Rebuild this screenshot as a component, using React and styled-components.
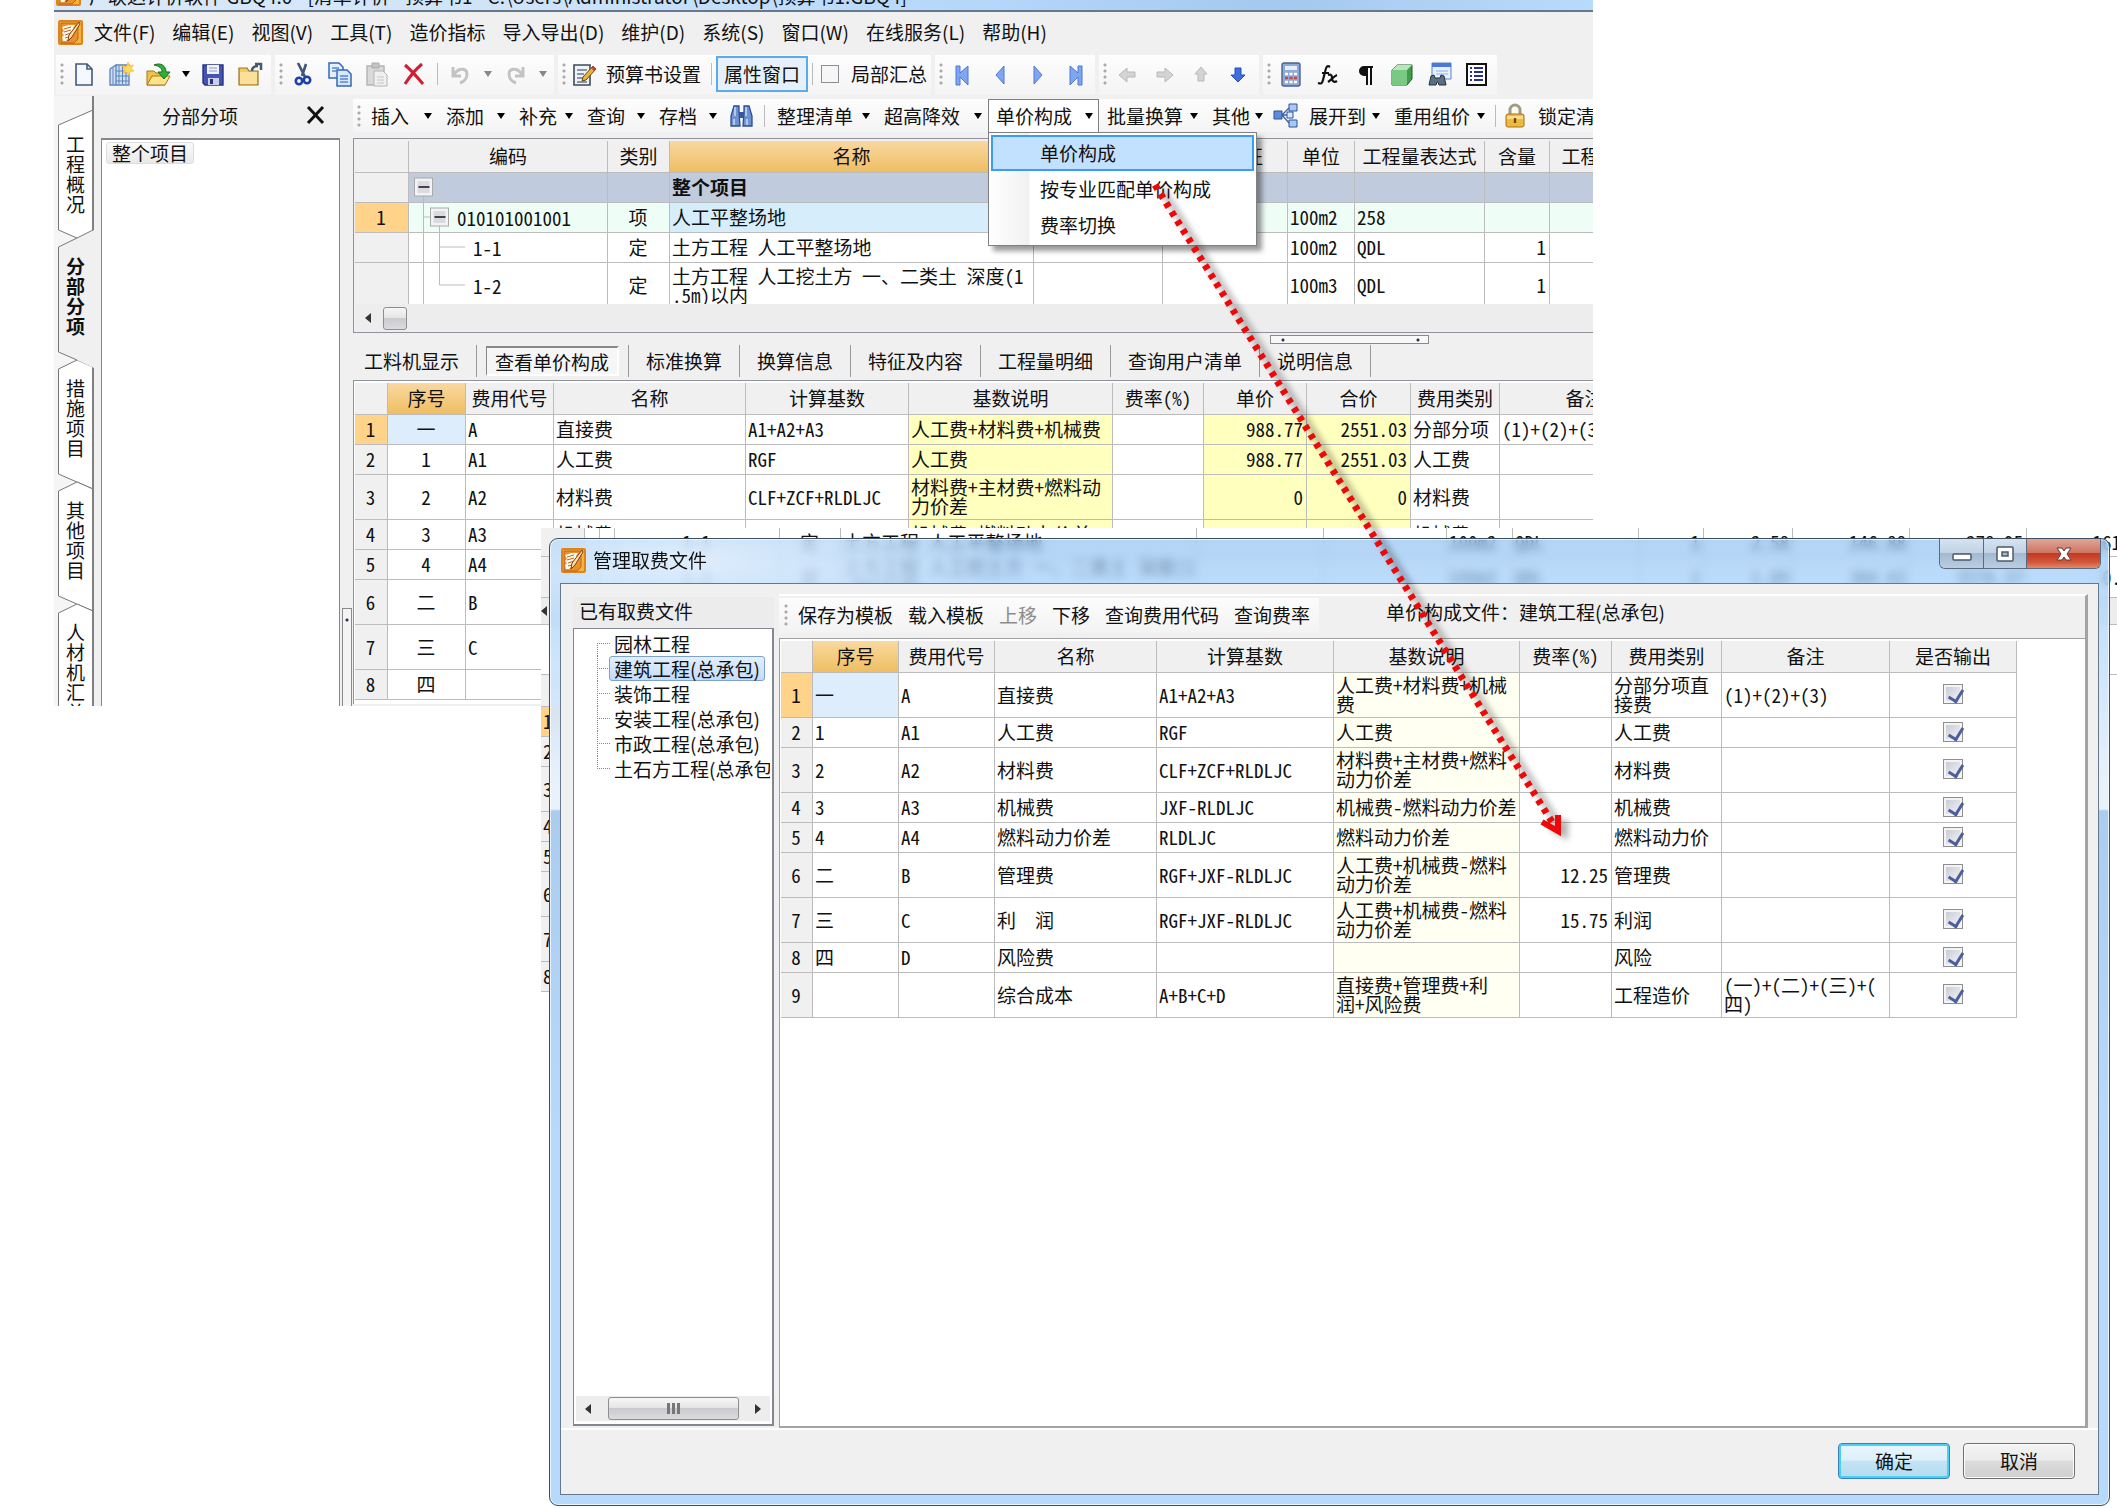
import styled, { createGlobalStyle, css } from 'styled-components'
import { useState } from 'react'

const GlobalStyle = createGlobalStyle`
  * {
    box-sizing: border-box;
  }
  body {
    margin: 0;
    background: #fff;
  }
  body, button, input, table {
    font-family: "Noto Sans CJK SC", "Liberation Sans", sans-serif;
    font-size: 19px;
    line-height: 20px;
    color: #111;
  }
  button {
    padding: 0;
    border: 0;
    background: none;
    white-space: nowrap;
  }
`

const gridFont = `"Noto Sans Mono CJK SC", "Noto Sans CJK SC", "Liberation Mono", monospace`

const Desktop = styled.div`
  position: relative;
  min-height: 100vh;
  overflow: hidden;
`

/* ---------- main window ---------- */

const MainWindow = styled.main`
  margin: 0 524px 0 54px;
  overflow: hidden;
  background: #f0f0f0;
`
const CaptionBar = styled.header`
  display: flex;
  align-items: flex-end;
  gap: 8px;
  height: 12px;
  padding: 0 0 4px 2px;
  border-bottom: 2px solid #66788c;
  background: linear-gradient(90deg, #dbe9f7, #cfe4f9 30%, #b4d7fa 60%, #a5c9ee 80%, #b9dbfb);
  overflow: hidden;
  white-space: nowrap;
  line-height: 20px;
`
const MenuBar = styled.nav`
  display: flex;
  align-items: center;
  gap: 17px;
  height: 43px;
  padding: 0 0 3px 4px;
`
const MenuLogo = styled.div`
  display: flex;
  margin-right: -6px;
`
const ToolRow = styled.div`
  display: flex;
  gap: 4px;
  height: 41px;
  padding-left: 2px;
`
const Band = styled.div`
  display: flex;
  align-items: center;
  height: 40px;
  padding: 0 2px 2px 0;
  background: linear-gradient(#fdfdfd, #f4f4f4);
`
const Grip = styled.span`
  flex: none;
  width: 10px;
  height: 24px;
  background: radial-gradient(circle at 6px 3px, #aaa 1px, transparent 2px) 0 0 / 10px 6px;
`
const Sep = styled.span`
  flex: none;
  width: 9px;
  height: 22px;
  background: linear-gradient(#bbb, #bbb) center / 1px 100% no-repeat;
`
const IconButton = styled.button`
  display: flex;
  flex: none;
  align-items: center;
  justify-content: center;
  width: ${p => p.$w || 37}px;
  height: 36px;
`
const Caret = styled.span`
  border: 4px solid transparent;
  border-top: 6px solid ${p => (p.$dim ? '#888' : '#000')};
  border-bottom: 0;
`
const CaretButton = styled.button`
  display: flex;
  align-items: center;
  justify-content: center;
  width: 18px;
  height: 36px;
`
const LabelButton = styled.button`
  height: 36px;
  padding: 0 6px;
  ${p => p.$on && css`
    border: 2px solid #5aaaf0;
    background: #e6f0fa;
  `}
`
const CheckLabel = styled.label`
  display: flex;
  align-items: center;
  gap: 12px;
  padding: 0 2px 0 4px;
`
const PlainCheck = styled.input`
  appearance: none;
  width: 18px;
  height: 18px;
  margin: 0;
  border: 1px solid #8a8f96;
  background: #f6f6f6;
`

const Body = styled.div`
  display: flex;
`
const SideTabs = styled.div`
  width: 40px;
  flex: none;
  padding: 20px 0 0 4px;
  background: #f5f5f5;
`
const SideTab = styled.button`
  position: relative;
  display: flex;
  align-items: flex-start;
  width: 36px;
  height: ${p => (p.$last ? 102 : 122)}px;
  padding: 18px 0 0 8px;
  overflow: ${p => (p.$last ? 'hidden' : 'visible')};
  text-align: left;
  white-space: normal;
  z-index: ${p => (p.$on ? 1 : 0)};
  font-weight: ${p => (p.$on ? 700 : 400)};
  svg {
    position: absolute;
    left: 0;
    top: 0;
    overflow: visible;
  }
  span {
    position: relative;
    display: block;
    width: 20px;
    word-break: break-all;
  }
`
const TreePane = styled.section`
  display: flex;
  flex-direction: column;
  flex: none;
  width: 246px;
  padding-left: 7px;
`
const PaneTitle = styled.div`
  display: flex;
  align-items: center;
  justify-content: space-between;
  height: 42px;
  padding: 0 14px 2px 61px;
`
const PaneBody = styled.div`
  flex: 1;
  padding: 2px 4px;
  border: 1px solid #828790;
  border-width: 2px 1px 0;
  background: #fff;
`
const RootNode = styled.button`
  height: 22px;
  padding: 0 5px;
  border: 1px solid #ddd;
  border-radius: 3px;
  background: linear-gradient(#fafafa, #e9e9e9);
  line-height: 18px;
`
const Splitter = styled.div`
  display: flex;
  align-items: flex-end;
  justify-content: center;
  flex: none;
  width: 13px;
  span {
    width: 10px;
    height: 98px;
    border: 1px solid #8a8a8a;
    border-bottom: 0;
    background: radial-gradient(circle at 4px 11px, #335 1px, transparent 2px), #f4f4f4;
  }
`
const Work = styled.section`
  flex: 1;
  min-width: 0;
  padding-top: 3px;
`
const Commands = styled.div`
  display: flex;
  align-items: center;
  height: 33px;
  margin-bottom: 6px;
  background: linear-gradient(#fdfdfd, #f4f4f4);
`
const Command = styled.button`
  display: flex;
  flex: none;
  align-items: center;
  justify-content: space-between;
  width: ${p => p.$w}px;
  height: 34px;
  padding: 0 6px 0 8px;
  ${p => p.$open && css`
    border: 1px solid #808080;
    border-bottom: 0;
    padding: 0 5px 0 7px;
    background: #fff;
  `}
`
const MenuHost = styled.div`
  position: relative;
  flex: none;
`
const Dropdown = styled.div`
  position: absolute;
  z-index: 5;
  left: 0;
  top: 33px;
  width: 269px;
  padding: 2px;
  border: 1px solid #808080;
  background: linear-gradient(90deg, #fff, #f1f1f1 40px, #fff 41px);
  box-shadow: 5px 5px 5px rgba(0, 0, 0, 0.4);
`
const DropItem = styled.button`
  display: block;
  width: 100%;
  height: 36px;
  padding-left: 47px;
  text-align: left;
  border: 2px solid ${p => (p.$on ? '#3c9cf5' : 'transparent')};
  background: ${p => (p.$on ? '#c2e0ff' : 'transparent')};
`
const GridBox = styled.div`
  border: 1px solid #909399;
  border-right: 0;
  border-bottom-width: ${p => (p.$open ? 0 : 1)}px;
  padding: 2px 0 ${p => (p.$open ? 4 : 0)}px 1px;
  background: ${p => (p.$open ? '#fff' : '#f0f0f0')};
  overflow: hidden;
`
const GridClip = styled.div`
  height: 163px;
  overflow: hidden;
  background: #fff;
`
const GridScroll = styled.div`
  display: flex;
  align-items: center;
  gap: 12px;
  height: 28px;
  padding-left: 10px;
  background: #ededed;
`
const Thumb = styled.span`
  display: flex;
  align-items: center;
  justify-content: center;
  gap: 2px;
  width: ${p => p.$w}px;
  height: 23px;
  border: 1px solid #8e8e8e;
  border-radius: 3px;
  background: linear-gradient(#f6f6f6, #e6e6e6 45%, #cacacf 50%, #dcdcdf);
  i {
    width: 3px;
    height: 11px;
    background: #777;
  }
`
const ArrowTip = styled.span`
  border: 5px solid transparent;
  ${p => (p.$right ? 'border-left: 6px solid #333; border-right: 0;' : 'border-right: 6px solid #333; border-left: 0;')}
`
const HandleRow = styled.div`
  padding-right: 164px;
`
const PaneHandle = styled.div`
  width: 159px;
  height: 9px;
  margin: 2px 0 1px auto;
  border: 1px solid #8a8a8a;
  background:
    radial-gradient(circle at 12px 4px, #335 1px, transparent 2px),
    radial-gradient(circle at 147px 4px, #335 1px, transparent 2px),
    #f8f8f8;
`
const TabStrip = styled.div`
  display: flex;
  align-items: center;
  height: 32px;
  margin-bottom: 3px;
`
const TabItem = styled.button`
  height: 32px;
  padding: 0 17px;
  border-right: 1px solid #999;
  &:first-child {
    padding-left: 11px;
  }
  ${p => p.$on && css`
    padding: 0 9px;
    span {
      display: block;
      height: 30px;
      padding: 4px 8px 0 8px;
      border: 2px solid #fff;
      border-top-color: #888;
      border-left: 1px solid #888;
      background: #f6f6f6;
    }
  `}
`

/* ---------- grids ---------- */

const Table = styled.table`
  table-layout: fixed;
  width: ${p => p.$w}px;
  border-spacing: 0;
  background: #fff;
  font-family: ${gridFont};
  line-height: 19px;
`
const Th = styled.th`
  height: 32px;
  padding: 0 0 2px;
  border-right: 1px solid #bcbcbc;
  border-bottom: 1px solid #bcbcbc;
  background: ${p => (p.$hot ? 'linear-gradient(#f9d8a0, #efbe62)' : '#f0f0f0')};
  font-weight: 400;
  white-space: nowrap;
  overflow: hidden;
`
const Td = styled.td`
  height: ${p => p.$h || 30}px;
  padding: 0 3px 2px 2px;
  border-right: 1px solid #bcbcbc;
  border-bottom: 1px solid #bcbcbc;
  background: ${p => p.$bg || '#fff'};
  font-weight: ${p => (p.$bold ? 700 : 400)};
  text-align: ${p => p.$align || 'left'};
  white-space: pre;
  overflow: hidden;
`
const TreeTd = styled(Td)`
  padding: 0;
`
const TreeCell = styled.div`
  display: flex;
  align-items: center;
  gap: 6px;
  height: ${p => p.$h}px;
  svg {
    flex: none;
  }
`
const OutputCheck = styled.input`
  appearance: none;
  display: block;
  width: 20px;
  height: 20px;
  margin: 0 auto;
  border: 1px solid #8e8f8f;
  background: linear-gradient(135deg, #c8ccd4, #f4f4f6) content-box, #f4f4f4;
  padding: 2px;
  &:checked::after {
    content: '';
    display: block;
    width: 7px;
    height: 12px;
    margin: 0 0 0 5px;
    border: solid #4b5f9f;
    border-width: 0 3px 3px 0;
    transform: rotate(32deg);
  }
`

/* ---------- window behind the dialog ---------- */

const BackWindow = styled.div`
  position: absolute;
  left: 541px;
  right: 0;
  top: 528px;
  bottom: 0;
  overflow: hidden;
  background: #fff;
`
const BackScroll = styled.div`
  display: flex;
  align-items: center;
  height: 27px;
  border-bottom: 1px solid #bcbcbc;
  background: #ededed;
`
const BackGap = styled.div`
  height: 50px;
  border-bottom: 1px solid #bcbcbc;
`

/* ---------- dialog ---------- */

const Dialog = styled.section`
  position: absolute;
  left: 549px;
  right: 7px;
  top: 538px;
  bottom: 2px;
  display: flex;
  flex-direction: column;
  padding: 0 10px 10px;
  border: 1px solid #3f4e5e;
  border-radius: 9px;
  box-shadow: inset 0 0 0 1px rgba(255, 255, 255, 0.7);
  background:
    radial-gradient(ellipse 320px 70px at 130px 20px, rgba(240, 247, 254, 0.7), transparent),
    linear-gradient(rgba(140, 190, 240, 0.66), rgba(160, 205, 250, 0.7) 45px, #e9f2fb 250px, #e9f2fb 270px, #aacdef 272px, #b7d9fb 600px);
  backdrop-filter: blur(4px);
`
const DialogTitle = styled.header`
  display: flex;
  align-items: flex-start;
  gap: 7px;
  height: 44px;
  padding: 9px 0 0 1px;
  h1 {
    flex: 1;
    margin: 0;
    font-size: 19px;
    font-weight: 400;
    line-height: 24px;
  }
`
const WindowButtons = styled.div`
  display: flex;
  margin: -9px -2px 0 0;
  border: 1px solid #5c6b7b;
  border-top: 0;
  border-radius: 0 0 6px 6px;
  overflow: hidden;
`
const WindowButton = styled.button`
  display: flex;
  align-items: center;
  justify-content: center;
  width: ${p => (p.$close ? 74 : 43)}px;
  height: 29px;
  border-left: ${p => (p.$first ? 0 : 1)}px solid #5c6b7b;
  background: ${p => (p.$close
    ? 'linear-gradient(#dfa798, #cf7261 48%, #c23a22 50%, #d4563c 80%, #e08a6c)'
    : 'linear-gradient(#d6e3f0, #c1d2e4 48%, #a3b9d0 50%, #b9cee3)')};
`
const Client = styled.div`
  display: flex;
  flex-direction: column;
  flex: 1;
  border: 1px solid #66788c;
  background: #f0f0f0;
`
const Panels = styled.div`
  display: flex;
  flex: 1;
  gap: 5px;
  padding: 10px 10px 0 12px;
  border-bottom: 2px solid #fff;
`
const FilePane = styled.div`
  display: flex;
  flex-direction: column;
  width: 201px;
  padding: 3px 0 2px;
  h2 {
    margin: 0;
    height: 31px;
    padding-left: 6px;
    font-size: 19px;
    font-weight: 400;
    line-height: 28px;
    background: #ececec;
  }
`
const FileBox = styled.div`
  display: flex;
  flex-direction: column;
  justify-content: space-between;
  flex: 1;
  padding: 2px 2px 3px;
  border: 1px solid #828790;
  border-width: 1px 2px 2px 1px;
  background: #fff;
`
const FileList = styled.ul`
  margin: 0;
  padding: 0 0 0 21px;
  list-style: none;
  overflow: hidden;
`
const FileItem = styled.li`
  position: relative;
  height: 25px;
  padding-left: 12px;
  &::before {
    content: '';
    position: absolute;
    left: 0;
    top: ${p => (p.$first ? 12 : 0)}px;
    width: 12px;
    height: 12px;
    border-left: 1px dotted #888;
    border-${p => (p.$first ? 'top' : 'bottom')}: 1px dotted #888;
  }
  &:not(:last-child)::after {
    content: '';
    position: absolute;
    left: 0;
    top: 12px;
    height: 13px;
    border-left: 1px dotted #888;
  }
  button {
    height: 25px;
    padding: 0 4px;
    border: 1px solid ${p => (p.$on ? '#7da2ce' : 'transparent')};
    border-radius: 3px;
    background: ${p => (p.$on ? 'linear-gradient(#e3effd, #c2dcfd)' : 'transparent')};
  }
`
const FileScroll = styled.div`
  display: flex;
  align-items: center;
  justify-content: space-between;
  height: 25px;
  padding: 0 9px;
  background: #ededed;
`
const FeePane = styled.div`
  display: flex;
  flex-direction: column;
  flex: 1;
  min-width: 0;
  border-top: 2px solid #fff;
  border-right: 3px solid #a3a3a3;
  border-bottom: 2px solid #a3a3a3;
`
const FeeTools = styled.div`
  display: flex;
  align-items: center;
  height: 42px;
  padding-bottom: 4px;
`
const FeeBand = styled.div`
  display: flex;
  align-items: center;
  gap: 15px;
  height: 35px;
  padding: 0 9px 0 1px;
  margin-right: 67px;
  background: linear-gradient(#fcfcfc, #f3f3f3);
  ${Grip} {
    margin-right: -7px;
  }
  button:disabled {
    color: #8d8d8d;
  }
`
const FeeFile = styled.div`
  padding-bottom: 6px;
`
const FeeGrid = styled.div`
  flex: 1;
  padding: 2px 0 0 1px;
  border: 1px solid #a0a0a0;
  border-width: 1px 0 0 1px;
  background: #fff;
`
const Footer = styled.footer`
  display: flex;
  justify-content: flex-end;
  gap: 13px;
  padding: 13px 23px 15px;
`
const PushButton = styled.button`
  width: 112px;
  height: 36px;
  border: 1px solid #707070;
  border-radius: 4px;
  background: linear-gradient(#f4f4f4, #ebebeb 48%, #dcdcdc 50%, #cfcfcf);
  box-shadow: inset 0 0 0 1px #fcfcfc;
  ${p => p.$main && css`
    border-color: #3c7fb1;
    background: linear-gradient(#eaf5fb, #dcf0fa 48%, #c3e4f4 50%, #b4dbef);
    box-shadow: inset 0 0 0 2px #48d0f8;
  `}
`

const Pointer = styled.svg`
  position: absolute;
  z-index: 10;
  left: 1140px;
  top: 170px;
  pointer-events: none;
`

/* ---------- icons ---------- */

const Logo = () => (
  <svg width="25" height="25" viewBox="0 0 25 25">
    <rect x="1" y="1" width="23" height="23" rx="1" fill="#f7b23a" stroke="#dd8420" strokeWidth="2" />
    <path d="M3 3h17v16l-4 4H3z" fill="#e8902a" stroke="#b4561a" strokeWidth=".8" />
    <path d="M4 7l7-2 6 0-2 3 1 2-2 2 0 3-3 3-3 3-3 0-1-4 2-2-2-2 2-2z" fill="#fffaf0" />
    <path d="M6 9l7-2M6 12l7-2M7 15l6-2M7 18l4-1" stroke="#c4611c" strokeWidth="1" />
    <path d="M21 2l1 2-8 13-4 4 1-6z" fill="#fbe0a0" stroke="#8a3a10" />
  </svg>
)

const icons = {
  page: <path d="M4 2h11l5 5v16H4zM15 2v5h5" fill="#f4f8ff" stroke="#43597f" strokeWidth="1.6" />,
  project: (
    <>
      <path d="M1 7l6-4v20H1zM7 3h13v20H7z" fill="#cfe0f5" stroke="#5b82b8" strokeWidth="1.3" />
      <path d="M4 6v16M10 4v18M13.500 4v18M17 4v18M7 9h13M7 14h13M7 19h13" stroke="#5b82b8" />
      <path d="M19 0l1.500 4 4-1-2.500 3.500L25 9l-4 .5L20 14l-2-4-4 1 2-4-3-3 4.500.5z" fill="#ffd95a" stroke="#eeb422" strokeWidth=".6" />
    </>
  ),
  open: (
    <>
      <path d="M1 9h7l2 2h9v12H1z" fill="#f0c148" stroke="#a37a14" />
      <path d="M1 23l5-9h18l-5 9z" fill="#ffe28a" stroke="#a37a14" />
      <path d="M8 3c7-3 12 1 12 7h4l-6 7-6-7h4c0-4-3-6-8-7z" fill="#2fae3b" stroke="#137020" />
    </>
  ),
  save: (
    <>
      <path d="M2 3h20v20H4l-2-2z" fill="#4553b5" stroke="#27327f" strokeWidth="1.4" />
      <path d="M6 3h12v9H6z" fill="#f0f3ff" />
      <path d="M8 6h8M8 9h8" stroke="#8d97d0" />
      <path d="M7 16h11v7H7z" fill="#c9cfe8" />
      <path d="M9 17h3v5H9z" fill="#27327f" />
    </>
  ),
  folderUp: (
    <>
      <path d="M1 6h8l2 3h9v14H1z" fill="#f4cb62" stroke="#9a7420" strokeWidth="1.2" />
      <path d="M2 10h17v12H2z" fill="#fbe09a" />
      <path d="M14 9c0-4 3-5 6-5M17 2h6v6" fill="none" stroke="#46596f" strokeWidth="2.500" />
    </>
  ),
  cut: (
    <>
      <path d="M7 1l7 14M15 2l-4 12" stroke="#3f5579" strokeWidth="2.600" fill="none" />
      <circle cx="8" cy="19" r="3.200" fill="none" stroke="#1c3fae" strokeWidth="2.600" />
      <circle cx="16" cy="18" r="3.200" fill="none" stroke="#1c3fae" strokeWidth="2.600" />
    </>
  ),
  copy: (
    <>
      <path d="M1 1h10l4 4v11H1z" fill="#e3eeff" stroke="#3468b8" strokeWidth="1.500" />
      <path d="M9 8h10l4 4v12H9z" fill="#d7e7ff" stroke="#3468b8" strokeWidth="1.500" />
      <path d="M4 6h7M4 9h5M12 14h8M12 17h8M12 20h8" stroke="#5588cf" strokeWidth="1.300" />
    </>
  ),
  paste: (
    <>
      <path d="M2 4h17v19H2z" fill="#d9d9d9" stroke="#b5b5b5" strokeWidth="1.500" />
      <path d="M7 1h7v5H7z" fill="#c4c4c4" stroke="#aaa" />
      <path d="M9 9h9l4 4v11H9z" fill="#f0f0f0" stroke="#b5b5b5" />
      <path d="M12 15h7M12 18h7M12 21h7" stroke="#c4c4c4" />
    </>
  ),
  remove: <path d="M3 3c7 6 13 13 18 19M20 2C13 8 8 14 3 22" stroke="#d01f35" strokeWidth="3" fill="none" />,
  undo: <path d="M5 5v9h8M6 13c3-7 13-8 13-1 0 5-4 8-7 9" stroke="#c3c3c3" strokeWidth="3" fill="none" />,
  redo: <path d="M20 5v9h-8M19 13C16 6 6 5 6 12c0 5 4 8 7 9" stroke="#c3c3c3" strokeWidth="3" fill="none" />,
  notebook: (
    <>
      <path d="M2 3h16v20H2z" fill="#eef3f8" stroke="#3d4c5c" strokeWidth="1.600" />
      <path d="M5 8h10M5 12h7M5 16h9M5 20h10" stroke="#66788c" strokeWidth="1.300" />
      <path d="M21 4l3 3-10 11-4 1 1-4z" fill="#e8b33e" stroke="#6b4a12" />
      <path d="M21 4l3 3-2 2-3-3z" fill="#c94040" />
    </>
  ),
  first: <path d="M5 4h4v7l8-7v19l-8-8v8H5z" fill="#7fa6f2" stroke="#4a78d2" />,
  prev: <path d="M16 4v18L8 13z" fill="#7fa6f2" stroke="#4a78d2" />,
  next: <path d="M9 4v18l8-9z" fill="#7fa6f2" stroke="#4a78d2" />,
  last: <path d="M20 4h-4v7L8 4v19l8-8v8h4z" fill="#7fa6f2" stroke="#4a78d2" />,
  left: <path d="M4 13l8-7v4h8v5h-8v5z" fill="#d4d4d4" stroke="#b9b9b9" />,
  right: <path d="M21 13l-8-7v4H5v5h8v5z" fill="#d4d4d4" stroke="#b9b9b9" />,
  up: <path d="M12 5l6 7h-3v7H9v-7H6z" fill="#d4d4d4" stroke="#b9b9b9" />,
  down: <path d="M12 20l7-7h-4V6H9v7H5z" fill="#3d6fe0" stroke="#2450b5" />,
  calc: (
    <>
      <rect x="3" y="1" width="18" height="23" rx="2" fill="#8fa9d8" stroke="#4a6191" strokeWidth="1.400" />
      <path d="M6 4h12v4H6z" fill="#e4eefc" />
      <path d="M6 12h12M6 20h12" stroke="#fff" strokeWidth="2.400" strokeDasharray="3 1.500" />
      <path d="M6 16h12" stroke="#d2473c" strokeWidth="2.400" strokeDasharray="3 1.500" />
    </>
  ),
  fx: (
    <path d="M14 5c-3-2-4 0-5 5L7 18c-1 4-2 4-5 3M6 11h7M12 13c3-1 4 0 4 3s2 5 5 3M21 13c-3 1-6 5-9 7" fill="none" stroke="#111" strokeWidth="2.200" />
  ),
  pilcrow: <path d="M20 4H11a5 5 0 000 10h2v9h2V6h2v17h2V6h1z" fill="#111" />,
  cube: (
    <>
      <path d="M2 8l5-5h15v14l-5 6H2z" fill="#3f9e4a" stroke="#1f5c28" />
      <path d="M2 8h15v15H2z" fill="#79c884" />
      <path d="M2 8l5-5h15l-5 5z" fill="#b6e6bc" />
    </>
  ),
  inspect: (
    <>
      <path d="M5 1h19v16H5z" fill="#e7f0ff" stroke="#5c82c4" />
      <path d="M5 1h19v4H5z" fill="#4a7ad8" />
      <path d="M9 9h12M9 12h12" stroke="#8fb0e6" />
      <path d="M4 14l3-1 1 3h5l1-3 3 1 2 9h-7l-1-3h-1l-1 3H2z" fill="#5c6f84" stroke="#24303c" />
    </>
  ),
  list: (
    <>
      <path d="M3 2h19v21H3z" fill="#fff" stroke="#111" strokeWidth="2" />
      <path d="M6 6h2M6 10h2M6 14h2M6 18h2M10 6h9M10 10h9M10 14h9M10 18h9" stroke="#26308f" strokeWidth="2" />
    </>
  ),
  find: (
    <>
      <path d="M5 3h5v6l1 14H2V13zM15 3h5l3 10v10h-9l1-14z" fill="#6f92d0" stroke="#2b4d92" strokeWidth="1.300" />
      <path d="M10 9h5v6h-5z" fill="#35579b" />
      <path d="M6 4v9M17 4v9M5 16v6M18 16v6" stroke="#c9daf7" strokeWidth="1.500" />
    </>
  ),
  expand: (
    <>
      <path d="M9 12l7-7M9 12l7 8M8 12h8" stroke="#46659d" strokeWidth="1.400" />
      <path d="M1 8h8v8H1z" fill="#5f8ddb" stroke="#2d5299" />
      <path d="M16 1h8v7h-8zM16 17h8v7h-8z" fill="#a9c8f5" stroke="#2d5299" />
      <path d="M14 9h6v6h-6z" fill="#dce9fb" stroke="#2d5299" />
    </>
  ),
  lock: (
    <>
      <path d="M7 12V7a5 5 0 0110 0v5" fill="none" stroke="#a49a84" strokeWidth="3" />
      <rect x="3" y="11" width="18" height="13" rx="2" fill="#f1b93a" stroke="#a4741a" />
      <path d="M4 13h16v3H4z" fill="#fbdc8c" />
      <path d="M12 15v5" stroke="#6b4a12" strokeWidth="2.400" />
    </>
  ),
}

const Icon = ({ name }) => (
  <svg width="25" height="25" viewBox="0 0 25 25">
    {icons[name]}
  </svg>
)

const Tool = ({ name, w }) => (
  <IconButton $w={w} aria-label={name}>
    <Icon name={name} />
  </IconButton>
)

/* ---------- data ---------- */

const menus = ['文件(F)', '编辑(E)', '视图(V)', '工具(T)', '造价指标', '导入导出(D)', '维护(D)', '系统(S)', '窗口(W)', '在线服务(L)', '帮助(H)']
const sideTabs = ['工程概况', '分部分项', '措施项目', '其他项目', '人材机汇总']
const detailTabs = ['工料机显示', '查看单价构成', '标准换算', '换算信息', '特征及内容', '工程量明细', '查询用户清单', '说明信息']
const priceMenu = ['单价构成', '按专业匹配单价构成', '费率切换']
const feeFiles = ['园林工程', '建筑工程(总承包)', '装饰工程', '安装工程(总承包)', '市政工程(总承包)', '土石方工程(总承包)']

const itemCols = [54, 199, 62, 364, 129, 125, 67, 130, 65, 119]
const itemHeads = ['', '编码', '类别', '名称', '', '项目特征', '单位', '工程量表达式', '含量', '工程量合计']
const items = [
  { tree: 'root', name: '整个项目', bg: '#c0ccde', bold: true },
  { no: '1', tree: 'item', code: '010101001001', kind: '项', name: '人工平整场地', unit: '100m2', expr: '258', bg: '#effdf7', hot: true },
  { tree: 'child', code: '1-1', kind: '定', name: '土方工程 人工平整场地', unit: '100m2', expr: 'QDL', amount: '1' },
  { tree: 'last', code: '1-2', kind: '定', name: '土方工程 人工挖土方 一、二类土 深度(1\n.5m)以内', unit: '100m3', expr: 'QDL', amount: '1', h: 46 },
]

const priceCols = [33, 78, 88, 192, 163, 204, 91, 103, 104, 89, 170]
const priceHeads = ['', '序号', '费用代号', '名称', '计算基数', '基数说明', '费率(%)', '单价', '合价', '费用类别', '备注']
const prices = [
  ['一', 'A', '直接费', 'A1+A2+A3', '人工费+材料费+机械费', '', '988.77', '2551.03', '分部分项', '(1)+(2)+(3)'],
  ['1', 'A1', '人工费', 'RGF', '人工费', '', '988.77', '2551.03', '人工费', ''],
  ['2', 'A2', '材料费', 'CLF+ZCF+RLDLJC', '材料费+主材费+燃料动\n力价差', '', '0', '0', '材料费', ''],
  ['3', 'A3', '机械费', 'JXF-RLDLJC', '机械费-燃料动力价差', '', '', '', '机械费', ''],
  ['4', 'A4', '', '', '', '', '', '', '', ''],
  ['二', 'B', '', '', '', '', '', '', '', ''],
  ['三', 'C', '', '', '', '', '', '', '', ''],
  ['四', '', '', '', '', '', '', '', '', ''],
]
const priceTall = [2, 5, 6]

const feeCols = [32, 86, 96, 162, 177, 186, 92, 110, 168, 127]
const feeHeads = ['', '序号', '费用代号', '名称', '计算基数', '基数说明', '费率(%)', '费用类别', '备注', '是否输出']
const fees = [
  ['一', 'A', '直接费', 'A1+A2+A3', '人工费+材料费+机械\n费', '', '分部分项直\n接费', '(1)+(2)+(3)'],
  ['1', 'A1', '人工费', 'RGF', '人工费', '', '人工费', ''],
  ['2', 'A2', '材料费', 'CLF+ZCF+RLDLJC', '材料费+主材费+燃料\n动力价差', '', '材料费', ''],
  ['3', 'A3', '机械费', 'JXF-RLDLJC', '机械费-燃料动力价差', '', '机械费', ''],
  ['4', 'A4', '燃料动力价差', 'RLDLJC', '燃料动力价差', '', '燃料动力价', ''],
  ['二', 'B', '管理费', 'RGF+JXF-RLDLJC', '人工费+机械费-燃料\n动力价差', '12.25', '管理费', ''],
  ['三', 'C', '利  润', 'RGF+JXF-RLDLJC', '人工费+机械费-燃料\n动力价差', '15.75', '利润', ''],
  ['四', 'D', '风险费', '', '', '', '风险', ''],
  ['', '', '综合成本', 'A+B+C+D', '直接费+管理费+利\n润+风险费', '', '工程造价', '(一)+(二)+(三)+(\n四)'],
]
const feeTall = [0, 2, 5, 6, 8]

const backCols = [44, 15, 15, 165, 61, 356, 127, 123, 66, 126, 65, 89, 117, 117, 117]
const backRows = [
  ['', '', '', '1-1', '定', '土方工程 人工平整场地', '', '', '100m2', 'QDL', '1', '2.58', '146.88', '378.95', '16189'],
  ['', '', '', '1-2', '定', '土方工程 人工挖土方 一、二类土 深度(1\n.5m)以内', '', '', '100m3', 'QDL', '1', '1.89', '384.02', '3578.37', '0.00'],
]

const sum = list => list.reduce((a, b) => a + b, 0)

const Cols = ({ widths }) => (
  <colgroup>
    {widths.map((w, i) => <col key={i} width={w} />)}
  </colgroup>
)

const Head = ({ labels, hot }) => (
  <thead>
    <tr>
      {labels.map((l, i) => <Th key={i} $hot={i === hot}>{l}</Th>)}
    </tr>
  </thead>
)

const MinusBox = ({ x, y }) => (
  <g>
    <rect x={x} y={y} width="18" height="18" fill="#f3f3f3" stroke="#aaa" />
    <rect x={x + 3} y={y + 3} width="12" height="12" fill="#d9dbe0" />
    <path d={`M${x + 4} ${y + 9}h11`} stroke="#111" strokeWidth="1.500" />
  </g>
)

const TreeMark = ({ kind, h }) => {
  const mid = Math.floor(h / 2)
  return (
    <svg width={kind === 'item' || kind === 'root' ? 42 : 58} height={h}>
      <g stroke="#bbb" fill="none">
        {kind === 'root' && <path d={`M14.500 ${mid}V${h}`} />}
        {kind !== 'root' && <path d={`M14.500 0V${h}`} />}
        {kind === 'item' && <path d={`M14.500 ${mid}H22M30.500 ${mid}V${h}`} />}
        {kind === 'child' && <path d={`M30.500 0V${h}M30.500 ${mid}H56`} />}
        {kind === 'last' && <path d={`M30.500 0V${mid}H56`} />}
      </g>
      {kind === 'root' && <MinusBox x={5.5} y={mid - 9} />}
      {kind === 'item' && <MinusBox x={21.5} y={mid - 9} />}
    </svg>
  )
}

const ItemTable = () => (
  <Table $w={sum(itemCols)}>
    <Cols widths={itemCols} />
    <Head labels={itemHeads} hot={3} />
    <tbody>
      {items.map((r, i) => {
        const cell = { $h: r.h, $bg: r.bg }
        return (
          <tr key={i}>
            <Td $h={r.h} $align="center" $bg={r.hot ? '#ffd38a' : '#f0f0f0'}>{r.no}</Td>
            <TreeTd {...cell}>
              <TreeCell $h={(r.h || 30) - 1}>
                <TreeMark kind={r.tree} h={(r.h || 30) - 1} />
                {r.code}
              </TreeCell>
            </TreeTd>
            <Td {...cell} $align="center">{r.kind}</Td>
            <Td {...cell} $bold={r.bold} $bg={r.hot ? '#d6eefb' : r.bg}>{r.name}</Td>
            <Td {...cell} />
            <Td {...cell} />
            <Td {...cell}>{r.unit}</Td>
            <Td {...cell}>{r.expr}</Td>
            <Td {...cell} $align="right">{r.amount}</Td>
            <Td {...cell} />
          </tr>
        )
      })}
    </tbody>
  </Table>
)

const PriceTable = () => (
  <Table $w={sum(priceCols)}>
    <Cols widths={priceCols} />
    <Head labels={priceHeads} hot={1} />
    <tbody>
      {prices.map((row, r) => {
        const h = priceTall.includes(r) ? 45 : 30
        return (
          <tr key={r}>
            <Td $h={h} $align="center" $bg={r === 0 ? '#ffd38a' : '#f0f0f0'}>{r + 1}</Td>
            {row.map((v, c) => (
              <Td
                key={c}
                $h={h}
                $align={c === 0 ? 'center' : c > 4 && c < 8 ? 'right' : 'left'}
                $bg={c === 4 || c === 6 || c === 7 ? '#ffffbe' : r === 0 && c === 0 ? '#deedfc' : '#fff'}
              >
                {v}
              </Td>
            ))}
          </tr>
        )
      })}
    </tbody>
  </Table>
)

const FeeTable = () => {
  const [output, setOutput] = useState(fees.map(() => true))

  const toggle = r => setOutput(output.map((v, i) => (i === r ? !v : v)))

  return (
    <Table $w={sum(feeCols)}>
      <Cols widths={feeCols} />
      <Head labels={feeHeads} hot={1} />
      <tbody>
        {fees.map((row, r) => {
          const h = feeTall.includes(r) ? 45 : 30
          return (
            <tr key={r}>
              <Td $h={h} $align="center" $bg={r === 0 ? '#ffd38a' : '#f0f0f0'}>{r + 1}</Td>
              {row.map((v, c) => (
                <Td
                  key={c}
                  $h={h}
                  $align={c === 5 ? 'right' : 'left'}
                  $bg={c === 4 ? '#fffff2' : r === 0 && c === 0 ? '#deedfc' : '#fff'}
                >
                  {v}
                </Td>
              ))}
              <Td $h={h}>
                <OutputCheck type="checkbox" aria-label={`是否输出 ${r + 1}`} checked={output[r]} onChange={() => toggle(r)} />
              </Td>
            </tr>
          )
        })}
      </tbody>
    </Table>
  )
}

const BackTables = () => (
  <BackWindow aria-hidden="true">
    <Table $w={sum(backCols)}>
      <Cols widths={backCols} />
      <tbody>
        {backRows.map((row, r) => (
          <tr key={r}>
            {row.map((v, c) => (
              <Td
                key={c}
                $h={r ? 41 : 29}
                $bg={c === 0 ? '#f0f0f0' : '#fff'}
                $align={c === 3 || c === 4 ? 'center' : c > 9 ? 'right' : 'left'}
              >
                {v}
              </Td>
            ))}
          </tr>
        ))}
      </tbody>
    </Table>
    <BackScroll><ArrowTip /></BackScroll>
    <BackGap />
    <Table $w={33}>
      <Cols widths={[33]} />
      <Head labels={['']} />
      <tbody>
        {prices.map((row, r) => (
          <tr key={r}>
            <Td $h={priceTall.includes(r) ? 45 : 30} $bg={r === 0 ? '#ffd38a' : '#f0f0f0'}>{r + 1}</Td>
          </tr>
        ))}
      </tbody>
    </Table>
  </BackWindow>
)

const SideTabShape = ({ kind }) => {
  if (kind === 'on') {
    return (
      <svg width="36" height="122">
        <path d="M36 -8L19 0L0 9V114L19 122L36 130Z" fill="#f0f0f0" />
        <path d="M35 -8L19 0L0.500 9V114L19 122" fill="none" stroke="#777" />
      </svg>
    )
  }
  const top = kind === 'first' ? 'M0.5 9L35 -6' : 'M0.5 9L19 0L35 7'
  return (
    <svg width="36" height="122">
      <path d={`${top}V129L0.500 114Z`} fill="#fff" stroke="#777" />
      <path d={kind === 'first' ? 'M35 -20V116' : 'M35 7V129'} stroke="#808080" strokeWidth="2" />
    </svg>
  )
}

const PriceCommand = () => {
  const [picked, setPicked] = useState(0)

  return (
    <MenuHost>
      <Command $w={111} $open>单价构成<Caret /></Command>
      <Dropdown role="menu">
        {priceMenu.map((m, i) => (
          <DropItem key={m} role="menuitem" $on={i === picked} onMouseEnter={() => setPicked(i)}>{m}</DropItem>
        ))}
      </Dropdown>
    </MenuHost>
  )
}

const MainToolbar = () => (
  <ToolRow>
    <Band>
      <Grip />
      <Tool name="page" />
      <Tool name="project" />
      <Tool name="open" />
      <CaretButton aria-label="打开"><Caret /></CaretButton>
      <Tool name="save" />
      <Tool name="folderUp" />
    </Band>
    <Band>
      <Grip />
      <Tool name="cut" />
      <Tool name="copy" />
      <Tool name="paste" />
      <Tool name="remove" />
      <Sep />
      <Tool name="undo" />
      <CaretButton aria-label="撤销"><Caret $dim /></CaretButton>
      <Tool name="redo" />
      <CaretButton aria-label="恢复"><Caret $dim /></CaretButton>
    </Band>
    <Band>
      <Grip />
      <Tool name="notebook" w={32} />
      <LabelButton>预算书设置</LabelButton>
      <Sep />
      <LabelButton $on>属性窗口</LabelButton>
      <Sep />
      <CheckLabel><PlainCheck type="checkbox" />局部汇总</CheckLabel>
    </Band>
    <Band>
      <Grip />
      {['first', 'prev', 'next', 'last'].map(n => <Tool key={n} name={n} />)}
    </Band>
    <Band>
      <Grip />
      {['left', 'right', 'up', 'down'].map(n => <Tool key={n} name={n} />)}
    </Band>
    <Band>
      <Grip />
      {['calc', 'fx', 'pilcrow', 'cube', 'inspect', 'list'].map(n => <Tool key={n} name={n} />)}
    </Band>
  </ToolRow>
)

const WorkCommands = () => (
  <Commands>
    <Grip />
    <Command $w={75}>插入<Caret /></Command>
    <Command $w={73}>添加<Caret /></Command>
    <Command $w={68}>补充<Caret /></Command>
    <Command $w={72}>查询<Caret /></Command>
    <Command $w={72}>存档<Caret /></Command>
    <Tool name="find" />
    <Sep />
    <Command $w={107}>整理清单<Caret /></Command>
    <Command $w={112}>超高降效<Caret /></Command>
    <PriceCommand />
    <Command $w={105}>批量换算<Caret /></Command>
    <Command $w={65}>其他<Caret /></Command>
    <Tool name="expand" w={32} />
    <Command $w={85}>展开到<Caret /></Command>
    <Command $w={105}>重用组价<Caret /></Command>
    <Sep />
    <Tool name="lock" w={30} />
    <Command $w={105}>锁定清单<Caret /></Command>
  </Commands>
)

const FeeDialog = () => {
  const [file, setFile] = useState(1)

  return (
    <Dialog role="dialog" aria-label="管理取费文件">
      <DialogTitle>
        <Logo />
        <h1>管理取费文件</h1>
        <WindowButtons>
          <WindowButton $first aria-label="最小化">
            <svg width="20" height="16"><rect x="1" y="8" width="18" height="6" rx="1" fill="#fff" stroke="#4d5966" strokeWidth="1.500" /></svg>
          </WindowButton>
          <WindowButton aria-label="最大化">
            <svg width="18" height="16">
              <rect x="1" y="1" width="16" height="14" rx="1" fill="#fff" stroke="#4d5966" strokeWidth="1.500" />
              <rect x="6" y="6" width="6" height="4" fill="#a3b9d0" stroke="#4d5966" strokeWidth="1.500" />
            </svg>
          </WindowButton>
          <WindowButton $close aria-label="关闭">
            <svg width="18" height="16">
              <path d="M2 2h5l2 3 2-3h5l-4 6 4 6h-5l-2-3-2 3H2l4-6z" fill="#fff" stroke="#5b3a3a" />
            </svg>
          </WindowButton>
        </WindowButtons>
      </DialogTitle>
      <Client>
        <Panels>
          <FilePane>
            <h2>已有取费文件</h2>
            <FileBox>
              <FileList>
                {feeFiles.map((f, i) => (
                  <FileItem key={f} $first={i === 0} $on={i === file}>
                    <button onClick={() => setFile(i)}>{f}</button>
                  </FileItem>
                ))}
              </FileList>
              <FileScroll>
                <ArrowTip />
                <Thumb $w={131}><i /><i /><i /></Thumb>
                <ArrowTip $right />
              </FileScroll>
            </FileBox>
          </FilePane>
          <FeePane>
            <FeeTools>
              <FeeBand>
                <Grip />
                <button>保存为模板</button>
                <button>载入模板</button>
                <button disabled>上移</button>
                <button>下移</button>
                <button>查询费用代码</button>
                <button>查询费率</button>
              </FeeBand>
              <FeeFile>单价构成文件：建筑工程(总承包)</FeeFile>
            </FeeTools>
            <FeeGrid>
              <FeeTable />
            </FeeGrid>
          </FeePane>
        </Panels>
        <Footer>
          <PushButton $main>确定</PushButton>
          <PushButton>取消</PushButton>
        </Footer>
      </Client>
    </Dialog>
  )
}

const App = () => {
  const [sideTab, setSideTab] = useState(1)
  const [detailTab, setDetailTab] = useState(1)

  return (
    <Desktop>
      <GlobalStyle />
      <MainWindow>
        <CaptionBar>
          <Logo />
          广联达计价软件 GBQ4.0 - [清单计价 - 预算书1 - C:\Users\Administrator\Desktop\预算书1.GBQ4]
        </CaptionBar>
        <MenuBar>
          <MenuLogo><Logo /></MenuLogo>
          {menus.map(m => <button key={m}>{m}</button>)}
        </MenuBar>
        <MainToolbar />
        <Body>
          <SideTabs>
            {sideTabs.map((t, i) => (
              <SideTab key={t} $on={i === sideTab} $last={i === 4} onClick={() => setSideTab(i)}>
                <SideTabShape kind={i === sideTab ? 'on' : i === 0 ? 'first' : 'off'} />
                <span>{t}</span>
              </SideTab>
            ))}
          </SideTabs>
          <TreePane>
            <PaneTitle>
              分部分项
              <button aria-label="关闭">
                <svg width="20" height="20"><path d="M2 2l15 16M17 2L2 18" stroke="#111" strokeWidth="3" /></svg>
              </button>
            </PaneTitle>
            <PaneBody>
              <RootNode>整个项目</RootNode>
            </PaneBody>
          </TreePane>
          <Splitter><span /></Splitter>
          <Work>
            <WorkCommands />
            <GridBox>
              <GridClip>
                <ItemTable />
              </GridClip>
              <GridScroll>
                <ArrowTip />
                <Thumb $w={24} />
              </GridScroll>
            </GridBox>
            <HandleRow><PaneHandle /></HandleRow>
            <TabStrip>
              {detailTabs.map((t, i) => (
                <TabItem key={t} $on={i === detailTab} onClick={() => setDetailTab(i)}>
                  <span>{t}</span>
                </TabItem>
              ))}
            </TabStrip>
            <GridBox $open>
              <PriceTable />
            </GridBox>
          </Work>
        </Body>
      </MainWindow>
      <BackTables />
      <FeeDialog />
      <Pointer width="450" height="690" viewBox="0 0 450 690">
        <defs>
          <filter id="soft" x="-20%" y="-20%" width="140%" height="140%">
            <feGaussianBlur stdDeviation="3" />
          </filter>
        </defs>
        <g fill="none" stroke="#000" opacity="0.3" strokeWidth="6" filter="url(#soft)" transform="translate(7 4)">
          <path d="M15 15L415 656M404 653L418 661L418 646" />
        </g>
        <g fill="none" stroke="#f00808">
          <path d="M15 15L412 652" strokeWidth="7" strokeDasharray="5 5.500" />
          <path d="M402 652L418 661L418 645" strokeWidth="6" />
        </g>
      </Pointer>
    </Desktop>
  )
}

export default App
